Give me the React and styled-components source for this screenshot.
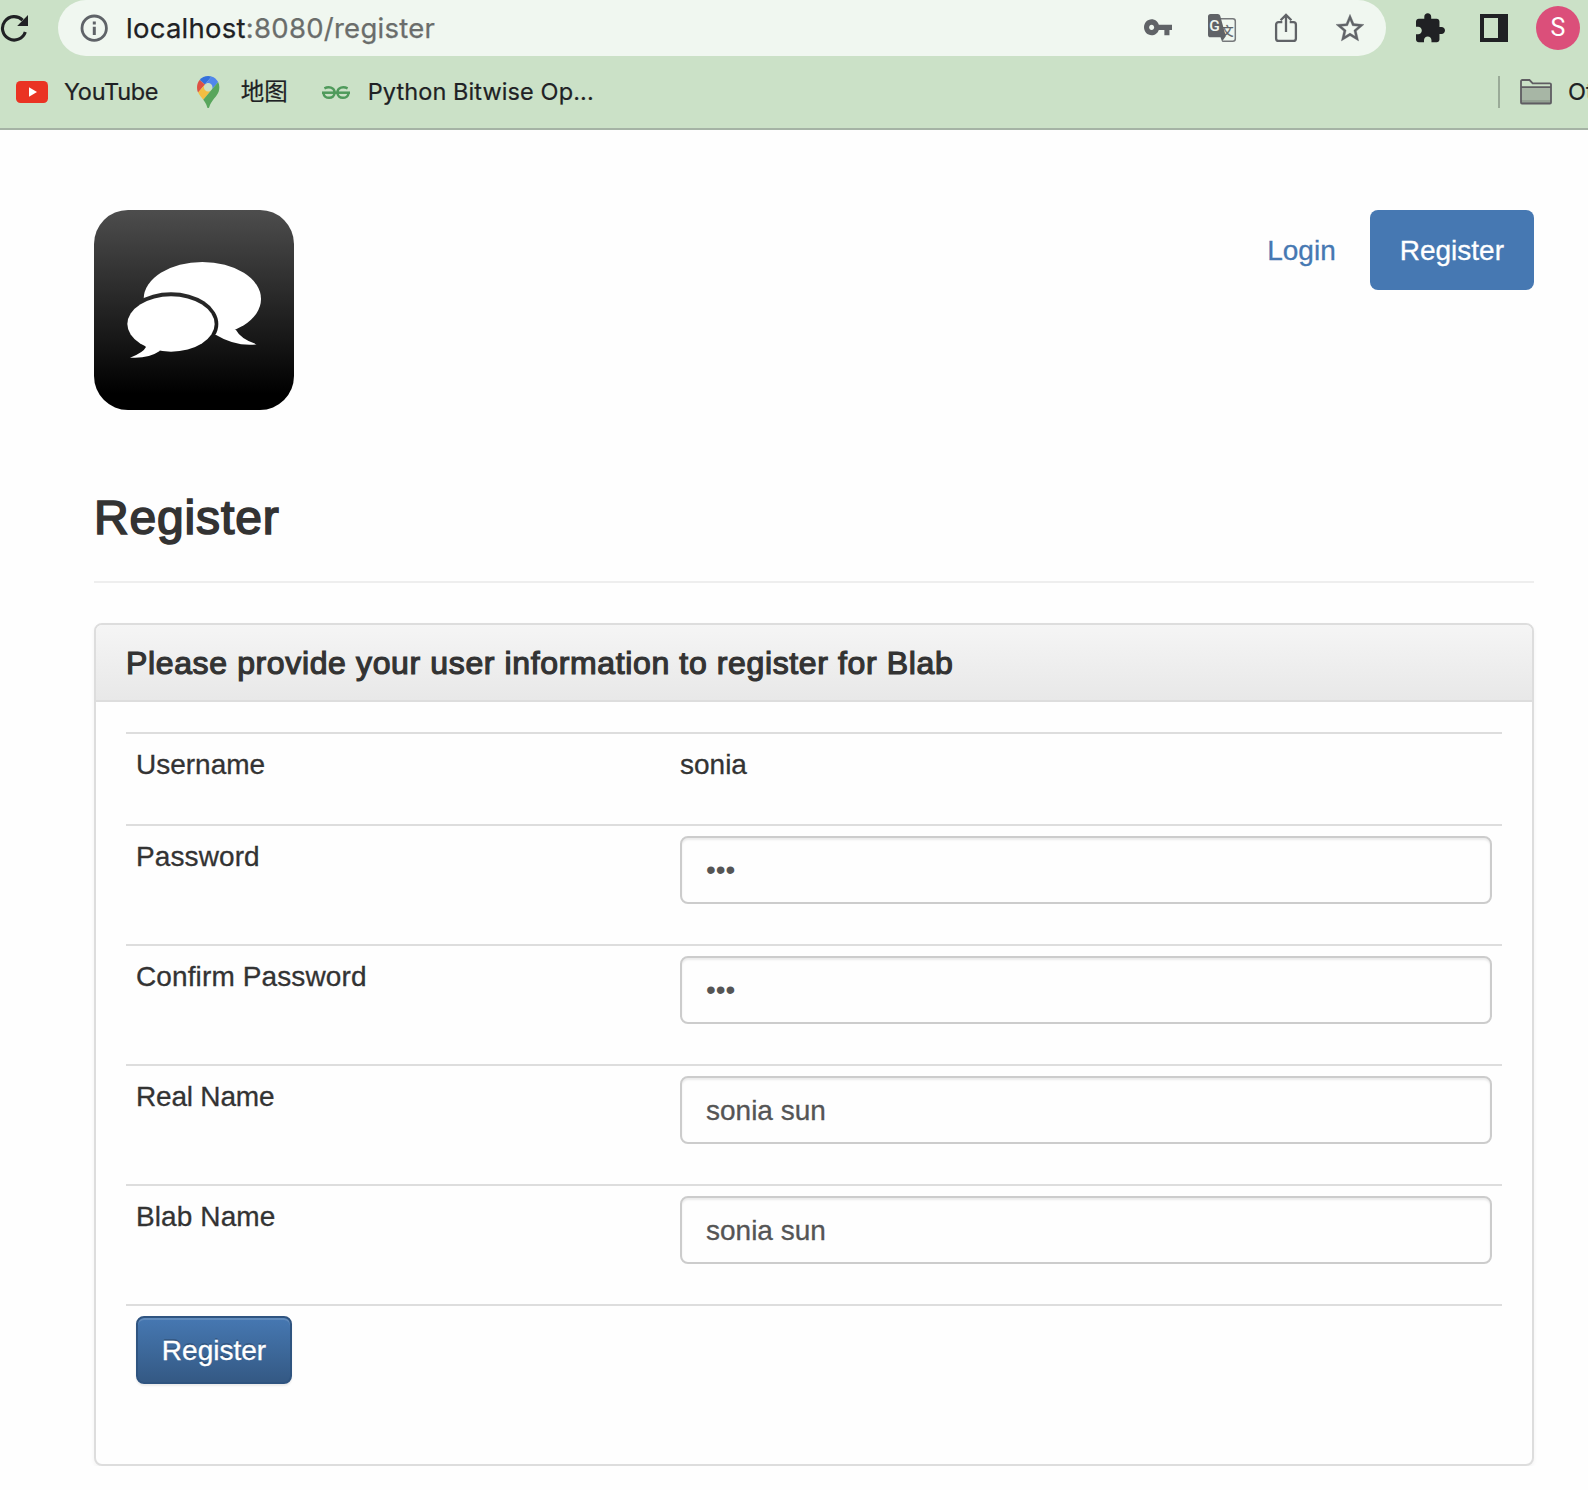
import React from "react";
import styled, { createGlobalStyle, css } from "styled-components";

const GlobalStyle = createGlobalStyle`
  *, *::before, *::after { box-sizing: border-box; }
  html, body { margin: 0; padding: 0; }
  body {
    background: #fefefe;
    color: #333;
    font-family: "Liberation Sans", Arial, sans-serif;
    font-size: 28px;
    line-height: 40px;
    overflow: hidden;
  }
`;

/* ---------- Browser chrome ---------- */

const Chrome = styled.header`
  height: 130px;
  background: #cbe1c7;
  border-bottom: 2px solid #a5b3a5;
  overflow: hidden;
  font-family: Inter, "Noto Sans CJK SC", sans-serif;
  color: #202124;
`;

const Toolbar = styled.div`
  display: flex;
  align-items: center;
  height: 56px;
`;

const Icon = styled.svg`
  display: block;
  flex: none;
  overflow: visible;
`;

const AddressBar = styled.div`
  display: flex;
  align-items: center;
  width: 1328px;
  height: 56px;
  margin-left: 29px;
  padding: 0 22px;
  border-radius: 28px;
  background: #f0f7f0;
  color: #606367;
`;

const Url = styled.span`
  flex: 1;
  margin-left: 18px;
  font-size: 27.5px;
  letter-spacing: 0.26px;
  color: #6a6d6b;
  white-space: nowrap;
  -webkit-text-stroke: 0.25px currentColor;
`;

const Host = styled.span`
  color: #202124;
`;

const AddressActions = styled.div`
  display: flex;
  align-items: center;
  gap: 39px;
`;

const PageActions = styled.div`
  display: flex;
  align-items: center;
  gap: 36px;
`;

const ToolbarActions = styled.div`
  display: flex;
  align-items: center;
  margin-left: 30px;
`;

const SidePanelIcon = styled.span`
  flex: none;
  width: 28px;
  height: 28px;
  margin: 0 28px 0 35px;
  border: 4px solid #202124;
  border-right-width: 10px;
`;

const Avatar = styled.span`
  flex: none;
  display: grid;
  place-items: center;
  width: 44px;
  height: 44px;
  border-radius: 50%;
  background: #db4f7a;
  color: #fff;
  font-family: Roboto, sans-serif;
  font-size: 25px;
`;

const BookmarksBar = styled.nav`
  display: flex;
  align-items: center;
  height: 72px;
  padding: 0 0 1px 16px;
`;

const Bookmark = styled.span`
  flex: none;
  display: flex;
  align-items: center;
  gap: ${(p) => p.$gap}px;
  margin-right: ${(p) => p.$after}px;
  font-size: 23.5px;
  letter-spacing: ${(p) => p.$tracking || "0"};
  white-space: nowrap;
  -webkit-text-stroke: 0.2px currentColor;
`;

const OtherBookmarks = styled(Bookmark)`
  margin-left: auto;
  width: 90px;
  height: 32px;
  padding-left: 20px;
  border-left: 2px solid #9aab98;
`;

/* ---------- Page ---------- */

const Page = styled.main`
  width: 1440px;
  margin: 80px 0 0 94px;
`;

const PageTop = styled.div`
  display: flex;
  justify-content: space-between;
  align-items: flex-start;
  height: 200px;
`;

const NavPills = styled.nav`
  display: flex;
  gap: 4px;
`;

const NavLink = styled.a`
  padding: 21px 30px 19px;
  border-radius: 8px;
  color: #4678b2;
  text-decoration: none;
  -webkit-text-stroke: 0.3px currentColor;
  ${(p) =>
    p.$active &&
    css`
      background: #4678b2;
      color: #fff;
    `}
`;

const Heading = styled.h3`
  margin: 81px 0 0;
  padding-bottom: 37px;
  border-bottom: 2px solid #eee;
  font-size: 48px;
  font-weight: 400;
  line-height: 53px;
  letter-spacing: 0.85px;
  -webkit-text-stroke: 1.7px #333;
`;

const Panel = styled.section`
  height: 843px;
  margin-top: 40px;
  border: 2px solid #ddd;
  border-radius: 8px;
  background: #fefefe;
  box-shadow: 0 2px 4px rgba(0, 0, 0, 0.05);
`;

const PanelHeading = styled.div`
  height: 77px;
  padding: 19px 30px 17px;
  border-bottom: 2px solid #ddd;
  border-radius: 6px 6px 0 0;
  background: linear-gradient(to bottom, #f5f5f5, #e8e8e8);
`;

const PanelTitle = styled.h3`
  margin: 0;
  font-size: 32px;
  font-weight: 400;
  line-height: 38px;
  letter-spacing: 0.63px;
  white-space: nowrap;
  -webkit-text-stroke: 1.2px #333;
`;

const PanelBody = styled.form`
  padding: 30px;
`;

const Row = styled.div`
  display: grid;
  grid-template-columns: 544px 1fr;
  align-items: start;
  height: ${(p) => (p.$short ? 92 : 120)}px;
  padding: 10px;
  border-top: 2px solid #ddd;
`;

const Cell = styled.span`
  padding-top: 1px;
  letter-spacing: ${(p) => p.$tracking || 0}px;
  -webkit-text-stroke: 0.3px currentColor;
`;

const TextInput = styled.input`
  width: 100%;
  height: 68px;
  padding: ${(p) => (p.type === "password" ? "12px 24px" : "14px 24px 12px")};
  border: 2px solid #ccc;
  border-radius: 8px;
  outline: none;
  background: #fefefe;
  box-shadow: inset 0 2px 2px rgba(0, 0, 0, 0.075);
  color: #555;
  font: 28px "Liberation Sans", Arial, sans-serif;
  -webkit-text-stroke: ${(p) => (p.type === "password" ? "0" : "0.3px currentColor")};
`;

const SubmitButton = styled.button`
  justify-self: start;
  width: 156px;
  height: 68px;
  padding: 2px 0 0;
  border: 2px solid #2f5480;
  border-radius: 8px;
  background: linear-gradient(to bottom, #4678b2, #345984);
  box-shadow: inset 0 2px 0 rgba(255, 255, 255, 0.15),
    0 2px 2px rgba(0, 0, 0, 0.075);
  color: #fff;
  font: 28px "Liberation Sans", Arial, sans-serif;
  text-shadow: 0 -2px 0 rgba(0, 0, 0, 0.2);
  -webkit-text-stroke: 0.3px currentColor;
`;

/* ---------- Icons ---------- */

const ReloadIcon = () => (
  <Icon width="29" height="28" viewBox="0 14 29 28">
    <path
      d="M25.3 32A11.7 11.7 0 1 1 22.6 20.2"
      fill="none"
      stroke="#202124"
      strokeWidth="3.1"
    />
    <path d="M28 15v11H17.2z" fill="#202124" />
  </Icon>
);

const InfoIcon = () => (
  <Icon width="28" height="28" viewBox="0 0 28 28">
    <circle cx="14.2" cy="14.2" r="12.2" fill="none" stroke="#5f6368" strokeWidth="2.8" />
    <path d="M12.800 7.600h3v3h-3zM12.800 12.800h3v8.200h-3z" fill="#5f6368" />
  </Icon>
);

const KeyIcon = () => (
  <Icon width="28" height="16" viewBox="1 6.500 22 12" preserveAspectRatio="none">
    <path
      fill="#606367"
      d="M12.650 10C11.830 7.670 9.610 6 7 6c-3.310 0-6 2.690-6 6s2.690 6 6 6c2.610 0 4.830-1.670 5.650-4H17v4h4v-4h2v-4H12.650zM7 14c-1.100 0-2-.900-2-2s.900-2 2-2 2 .900 2 2-.900 2-2 2z"
    />
  </Icon>
);

const TranslateIcon = () => (
  <Icon width="28" height="28" viewBox="0 0 28 28">
    <path
      d="M12.500 4.700h12.300a2.500 2.500 0 0 1 2.500 2.500v17.600a2.500 2.500 0 0 1-2.500 2.500H14.200"
      fill="none"
      stroke="#76797b"
      strokeWidth="1.500"
    />
    <path
      d="M2.600 0H9.800a2.500 2.500 0 0 1 2.400 1.800L17.800 22.200 14 27.500l-1.500-4.200H2.600A2.600 2.600 0 0 1 0 20.700V2.600A2.600 2.600 0 0 1 2.600 0z"
      fill="#606367"
    />
    <text x="1.300" y="17.200" fill="#f0f7f0" fontFamily="Roboto, sans-serif" fontSize="15.500" fontWeight="500">
      G
    </text>
    <text x="13" y="21.500" fill="#606367" stroke="#606367" strokeWidth="0.300" fontFamily="Noto Sans CJK SC, sans-serif" fontSize="12.500">
      文
    </text>
  </Icon>
);

const ShareIcon = () => (
  <Icon width="22" height="30" viewBox="0 0 22 30" fill="none" stroke="#606367" strokeWidth="2.300">
    <path d="M7.300 9.200H3.600a2.500 2.500 0 0 0-2.500 2.500v13.700a2.500 2.500 0 0 0 2.500 2.500h14.800a2.500 2.500 0 0 0 2.500-2.500V11.700a2.500 2.500 0 0 0-2.500-2.500h-3.700" />
    <path d="M11 19V2.500M5.600 7.300L11 1.900l5.400 5.400" />
  </Icon>
);

const StarIcon = () => (
  <Icon width="28" height="28" viewBox="2 2 20 19.500">
    <path
      fill="#606367"
      stroke="#606367"
      strokeWidth="0.250"
      d="M22 9.240l-7.190-.620L12 2 9.190 8.630 2 9.240l5.460 4.730L5.820 21 12 17.270 18.180 21l-1.630-7.030L22 9.240zM12 15.400l-3.760 2.270 1-4.280-3.320-2.880 4.380-.380L12 6.100l1.710 4.040 4.380.380-3.320 2.880 1 4.280L12 15.400z"
    />
  </Icon>
);

const PuzzleIcon = () => (
  <Icon width="29" height="29" viewBox="2 1.500 21 21">
    <path
      fill="#202124"
      d="M20.500 11H19V7c0-1.100-.900-2-2-2h-4V3.500C13 2.120 11.880 1 10.500 1S8 2.120 8 3.500V5H4c-1.100 0-1.990.900-1.990 2v3.800H3.500c1.490 0 2.700 1.210 2.700 2.700s-1.210 2.700-2.700 2.700H2V20c0 1.100.900 2 2 2h3.800v-1.500c0-1.490 1.210-2.700 2.700-2.700s2.700 1.210 2.700 2.700V22H17c1.100 0 2-.900 2-2v-4h1.500c1.380 0 2.500-1.120 2.500-2.500S21.880 11 20.500 11z"
    />
  </Icon>
);

const YouTubeIcon = () => (
  <Icon width="32" height="22" viewBox="0 0 32 22">
    <rect width="32" height="22" rx="4.500" fill="#ea3323" />
    <path d="M13 6.300v9.400l8-4.700z" fill="#fff" />
  </Icon>
);

const MapsIcon = () => (
  <Icon width="22.400" height="32" viewBox="0 0 92.300 132.300">
    <path fill="#3471dc" d="M60.200 2.200C55.800.800 51 0 46.100 0 32 0 19.300 6.400 10.800 16.500l21.800 18.300L60.200 2.200z" />
    <path fill="#dd5144" d="M10.800 16.500C4.100 24.500 0 34.900 0 46.100c0 8.700 1.700 15.700 4.600 22l28-33.300-21.800-18.300z" />
    <path fill="#5086ec" d="M46.200 28.500c9.800 0 17.700 7.900 17.700 17.700 0 4.300-1.600 8.300-4.200 11.400 0 0 13.900-16.600 27.500-32.700-5.600-10.800-15.300-19-27-22.700L32.600 34.800c3.300-3.800 8.100-6.300 13.600-6.300" />
    <path fill="#f3be42" d="M46.200 63.800c-9.800 0-17.700-7.900-17.700-17.700 0-4.300 1.500-8.300 4.100-11.300l-28 33.300c4.800 10.600 12.800 19.200 21 29.900l34.100-40.500c-3.300 3.900-8.100 6.300-13.500 6.300" />
    <path fill="#58a65c" d="M59.100 109.200c15.400-24.100 33.300-35 33.300-63 0-7.700-1.900-14.900-5.200-21.300L25.600 98c2.600 3.400 5.300 7.300 7.900 11.300 9.400 14.500 6.800 23.100 12.800 23.100s3.400-8.700 12.800-23.200" />
  </Icon>
);

const GeeksIcon = () => (
  <Icon width="28" height="14" viewBox="0 -1 28 14" fill="none" stroke="#4f9a5b" strokeWidth="2.500">
    <path d="M2.400 2.300C6.500.300 12.600 1 12.600 6.500c0 7-10.600 7-11.200.500" />
    <path d="M25.600 2.300C21.500.300 15.400 1 15.400 6.500c0 7 10.600 7 11.200.500" />
    <path d="M0 6.700h28" />
  </Icon>
);

const FolderIcon = () => (
  <Icon width="32" height="26" viewBox="0 0 32 26">
    <path d="M1 8h30v15.800H1z" fill="#a7b6a5" />
    <path d="M1 21h30v3H1z" fill="#93a192" />
    <path
      d="M1 23.500V2.200A1.200 1.200 0 0 1 2.200 1h7.300l3.200 3.300h17.100A1.200 1.200 0 0 1 31 5.500v18a1 1 0 0 1-1 1H2a1 1 0 0 1-1-1zM1 8.200h30"
      fill="none"
      stroke="#5f5d62"
      strokeWidth="1.800"
    />
  </Icon>
);

const BlabLogo = () => (
  <Icon width="200" height="200" viewBox="42 45 600 600">
    <defs>
      <linearGradient id="logoFill" x1="0" y1="0" x2="0" y2="1">
        <stop offset="0" stopColor="#4d4d4d" />
        <stop offset="0.920" stopColor="#000" />
      </linearGradient>
      <mask id="bubbleGap" maskUnits="userSpaceOnUse" x="42" y="45" width="600" height="600">
        <rect x="42" y="45" width="600" height="600" fill="#fff" />
        <ellipse cx="273" cy="387" rx="142" ry="95" fill="#000" />
      </mask>
    </defs>
    <rect x="42" y="45" width="600" height="600" rx="102" fill="url(#logoFill)" />
    <g mask="url(#bubbleGap)" fill="#fff">
      <ellipse cx="367" cy="312" rx="176" ry="111" />
      <path d="M380 400l88 5q14 27 62 43-64 7-123-29z" />
    </g>
    <ellipse cx="273" cy="387" rx="131" ry="83" fill="#fff" />
    <path d="M190 445l8 11q-8 17-48 32 54 4 88-19l10-20z" fill="#fff" />
  </Icon>
);

/* ---------- App ---------- */

const fields = [
  { label: "Password", type: "password", value: "abc", tracking: 0.1 },
  { label: "Confirm Password", type: "password", value: "abc", tracking: 0.12 },
  { label: "Real Name", type: "text", value: "sonia sun", tracking: -0.2 },
  { label: "Blab Name", type: "text", value: "sonia sun", tracking: 0.1 },
];

export default function App() {
  return (
    <>
      <GlobalStyle />
      <Chrome>
        <Toolbar>
          <ReloadIcon />
          <AddressBar>
            <InfoIcon />
            <Url>
              <Host>localhost</Host>:8080/register
            </Url>
            <AddressActions>
              <PageActions>
                <KeyIcon />
                <TranslateIcon />
              </PageActions>
              <ShareIcon />
              <StarIcon />
            </AddressActions>
          </AddressBar>
          <ToolbarActions>
            <PuzzleIcon />
            <SidePanelIcon />
            <Avatar>S</Avatar>
          </ToolbarActions>
        </Toolbar>
        <BookmarksBar>
          <Bookmark $gap={16} $after={39} $tracking="-0.3px">
            <YouTubeIcon />
            YouTube
          </Bookmark>
          <Bookmark $gap={21} $after={34}>
            <MapsIcon />
            地图
          </Bookmark>
          <Bookmark $gap={18} $after={0} $tracking="0.1px">
            <GeeksIcon />
            Python Bitwise Op...
          </Bookmark>
          <OtherBookmarks $gap={16} $after={0}>
            <FolderIcon />
            Other Bookmarks
          </OtherBookmarks>
        </BookmarksBar>
      </Chrome>

      <Page>
        <PageTop>
          <BlabLogo />
          <NavPills>
            <NavLink>Login</NavLink>
            <NavLink $active>Register</NavLink>
          </NavPills>
        </PageTop>

        <Heading>Register</Heading>

        <Panel>
          <PanelHeading>
            <PanelTitle>Please provide your user information to register for Blab</PanelTitle>
          </PanelHeading>
          <PanelBody>
            <Row $short>
              <Cell>Username</Cell>
              <Cell>sonia</Cell>
            </Row>
            {fields.map((f) => (
              <Row key={f.label}>
                <Cell $tracking={f.tracking}>{f.label}</Cell>
                <TextInput type={f.type} defaultValue={f.value} />
              </Row>
            ))}
            <Row>
              <SubmitButton type="button">Register</SubmitButton>
            </Row>
          </PanelBody>
        </Panel>
      </Page>
    </>
  );
}
